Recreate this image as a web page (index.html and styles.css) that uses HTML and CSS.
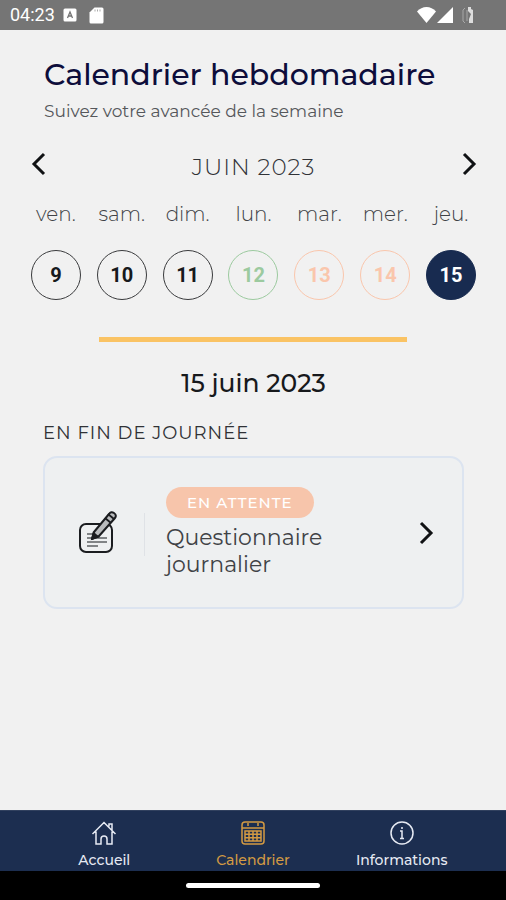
FILE: index.html
```html
<!DOCTYPE html>
<html lang="fr">
<head>
<meta charset="utf-8">
<meta name="viewport" content="width=device-width, initial-scale=1">
<title>Calendrier hebdomadaire</title>
<link rel="stylesheet" href="styles.css">
</head>
<body>
<header class="status">
  <time>04:23</time>
  <svg class="status-app" width="14" height="14" viewBox="0 0 14 14" aria-hidden="true"><rect x="0.5" y="0.5" width="13" height="13" rx="1.5" fill="#fff"/><path d="M4.500 10 7 4l2.500 6M5.500 8h3" fill="none" stroke="#757575" stroke-width="1.300"/></svg>
  <svg class="status-card" width="15" height="17" viewBox="0 0 15 17" aria-hidden="true"><path d="M5.500.5H13a1.500 1.500 0 0 1 1.500 1.500v13a1.500 1.500 0 0 1-1.500 1.500H2A1.500 1.500 0 0 1 .5 15V5.500z" fill="#fff"/><path d="M6 2.500v2M8.500 2.500v2M11 2.500v2" stroke="#aaa"/></svg>
  <span class="status-right">
    <svg width="19" height="16" viewBox="0 0 19 16" aria-hidden="true"><path d="M9.500 16 0 4.500C2.500 1.500 6 0 9.500 0S16.500 1.500 19 4.500z" fill="#fff"/></svg>
    <svg width="16" height="16" viewBox="0 0 16 16" aria-hidden="true"><path d="M16 0v16H0z" fill="#fff"/></svg>
    <svg class="status-battery" width="12" height="17" viewBox="0 0 12 17" aria-hidden="true"><path d="M3 1 1 3v11l2 2M5 3v11" fill="none" stroke="#a8a8a8"/><path d="M6 0h3v2l2 1v13H7v-4l2-5-3-3z" fill="#ddd"/></svg>
  </span>
</header>

<main>
  <div class="heading">
    <h1>Calendrier hebdomadaire</h1>
    <p>Suivez votre avancée de la semaine</p>
  </div>

  <section class="calendar" aria-label="Semaine">
    <div class="month">
      <button class="arrow" aria-label="Semaine précédente"><svg width="16" height="24" viewBox="0 0 16 24"><path d="m14 2-10 10 10 10"/></svg></button>
      <h2>JUIN 2023</h2>
      <button class="arrow" aria-label="Semaine suivante"><svg width="16" height="24" viewBox="0 0 16 24"><path d="m3 2 10 10L3 22"/></svg></button>
    </div>
    <div class="week">
      <div class="day"><span>ven.</span><button>9</button></div>
      <div class="day"><span>sam.</span><button>10</button></div>
      <div class="day"><span>dim.</span><button>11</button></div>
      <div class="day done"><span>lun.</span><button>12</button></div>
      <div class="day waiting"><span>mar.</span><button>13</button></div>
      <div class="day waiting"><span>mer.</span><button>14</button></div>
      <div class="day selected"><span>jeu.</span><button aria-current="date">15</button></div>
    </div>
  </section>

  <hr>

  <section class="tasks">
    <h2>15 juin 2023</h2>
    <h3>EN FIN DE JOURNÉE</h3>
    <a class="card" href="#questionnaire">
      <svg class="note" width="40" height="44" viewBox="0 0 40 44" aria-hidden="true">
        <rect x="1" y="13" width="32" height="28" rx="6" fill="none" stroke="#1b1d20" stroke-width="2"/>
        <path d="M8 23h9M8 27h20M8 31h20M8 35h11" fill="none" stroke="#5d6063" stroke-width="1.500"/>
        <path d="m13 28 2-7L30 3q2-3 5-1t1 5L20 25z" fill="#b9bbbd" stroke="#1b1d20" stroke-width="2" stroke-linejoin="round"/>
        <path d="m13 28 1.500-6 4.500 4zM26 7l6 5M29 3l6 5" fill="#1b1d20" stroke="#1b1d20" stroke-width="1.800"/>
      </svg>
      <span class="task">
        <span class="badge">EN ATTENTE</span>
        <span class="task-name">Questionnaire journalier</span>
      </span>
      <span class="arrow"><svg width="16" height="24" viewBox="0 0 16 24" aria-hidden="true"><path d="m3 2 10 10L3 22"/></svg></span>
    </a>
  </section>
</main>

<nav>
  <a href="#accueil">
    <svg width="26" height="26" viewBox="0 0 26 26" aria-hidden="true"><path d="M1.500 14 13 2.500 24.500 14M5 11.500V24h5v-5q0-3 3-3t3 3v5h5V11.500M18 6.500V4h3v6"/></svg>
    Accueil
  </a>
  <a class="active" href="#calendrier" aria-current="page">
    <svg width="26" height="26" viewBox="0 0 26 26" aria-hidden="true"><rect x="2" y="2" width="22" height="22" rx="3"/><path d="M2 8h22M5 11h16v10H5zM5 14.300h16M5 17.700h16M9 11v10M13 11v10M17 11v10M8 3v3M18 3v3"/></svg>
    Calendrier
  </a>
  <a href="#informations">
    <svg width="26" height="26" viewBox="0 0 26 26" aria-hidden="true"><circle cx="13" cy="13" r="11"/><path d="M11 11h2v7M11 18.500h4M13 7v2"/></svg>
    Informations
  </a>
</nav>
<footer class="gesture"><span></span></footer>
</body>
</html>
```

FILE: styles.css
```css
* {
  box-sizing: border-box;
}

body {
  display: flex;
  flex-direction: column;
  min-height: 100vh;
  margin: 0;
  background: #f1f1f1;
  color: #17191c;
  font-family: Montserrat, Inter, "Liberation Sans", sans-serif;
}

h1, h2, h3, p {
  margin: 0;
}

button {
  padding: 0;
  border: 0;
  background: none;
  color: inherit;
  cursor: pointer;
}

a {
  color: inherit;
  text-decoration: none;
}

svg {
  display: block;
  flex: none;
}

.status {
  display: flex;
  align-items: center;
  height: 30px;
  padding: 0 32px 0 10px;
  background: #757575;
  color: #fff;
  font: 18px/30px Roboto, sans-serif;
}

.status-app {
  margin-left: 8px;
}

.status-card {
  margin-left: 12px;
}

.status-right {
  display: flex;
  gap: 1px;
  margin-left: auto;
}

.status-battery {
  margin-left: 8px;
}

main {
  flex: 1;
}

.heading {
  padding: 27px 43px 0 44px;
}

h1 {
  color: #0d0d3b;
  font-size: 30px;
  font-weight: 500;
  line-height: 36px;
}

.heading p {
  margin-top: 6px;
  color: #55575b;
  font-size: 17px;
  font-weight: 400;
  line-height: 24px;
}

.calendar {
  padding: 0 22px 0 23px;
}

.month {
  display: flex;
  align-items: center;
  justify-content: space-between;
  margin-top: 24px;
  padding: 0 7px;
}

.month h2 {
  padding-top: 6px;
  color: #303236;
  font-size: 23px;
  font-weight: 300;
  line-height: 28px;
  letter-spacing: 1px;
}

.arrow path {
  fill: none;
  stroke: #101214;
  stroke-width: 3;
}

.week {
  display: grid;
  grid-template-columns: repeat(7, 1fr);
  margin-top: 20px;
}

.day {
  display: flex;
  flex-direction: column;
  align-items: center;
  gap: 23px;
}

.day span {
  color: #404246;
  font-size: 20px;
  font-weight: 300;
  line-height: 26px;
}

.day button {
  width: 50px;
  height: 50px;
  border: 1px solid #3a3b3d;
  border-radius: 50%;
  font: 700 20px/26px Roboto, sans-serif;
}

.done button {
  border-color: #9cca9f;
  color: #9cca9f;
}

.waiting button {
  border-color: #fac6ac;
  color: #fac6ac;
}

.selected button {
  border-color: #182b50;
  background: #182b50;
  color: #fff;
}

hr {
  width: 61%;
  height: 5px;
  margin: 37px auto 0;
  border: 0;
  background: #fac364;
}

.tasks {
  padding: 0 42px 0 43px;
}

.tasks h2 {
  margin-top: 26px;
  font-size: 25px;
  font-weight: 500;
  line-height: 30px;
  text-align: center;
}

.tasks h3 {
  margin-top: 23px;
  color: #303236;
  font-size: 18px;
  font-weight: 400;
  line-height: 24px;
  letter-spacing: 1px;
}

.card {
  display: flex;
  align-items: center;
  margin-top: 11px;
  padding: 28px 28px 28px 34px;
  border: 2px solid #dce4f0;
  border-radius: 14px;
  background: #eef0f1;
}

.note {
  margin-right: 25px;
}

.task {
  position: relative;
  flex: 1;
  padding: 1px 0 1px 22px;
}

.task::before {
  position: absolute;
  top: 27px;
  bottom: 23px;
  left: 0;
  border-left: 1px solid #dfe2e6;
  content: "";
}

.badge {
  display: block;
  width: fit-content;
  padding: 0 21px;
  border-radius: 16px;
  background: #f7c5ab;
  color: #fff;
  font-size: 15px;
  font-weight: 500;
  line-height: 31px;
  letter-spacing: 1px;
}

.task-name {
  display: block;
  max-width: 200px;
  margin-top: 6px;
  color: #404246;
  font-size: 22px;
  font-weight: 400;
  line-height: 27px;
}

nav {
  display: grid;
  grid-template-columns: repeat(3, 1fr);
  padding: 9px 30px 2px;
  border-top: 1px solid #31415f;
  background: #1c2e50;
  color: #e6eaf3;
}

nav a {
  display: flex;
  flex-direction: column;
  align-items: center;
  gap: 5px;
  font-size: 14px;
  font-weight: 500;
  line-height: 18px;
}

nav svg {
  fill: none;
  stroke: currentColor;
  stroke-width: 1.5;
}

nav .active {
  color: #d39a43;
}

.gesture {
  display: grid;
  justify-items: center;
  height: 29px;
  padding-top: 12px;
  background: #000;
}

.gesture span {
  width: 134px;
  height: 5px;
  border-radius: 3px;
  background: #fff;
}
```
